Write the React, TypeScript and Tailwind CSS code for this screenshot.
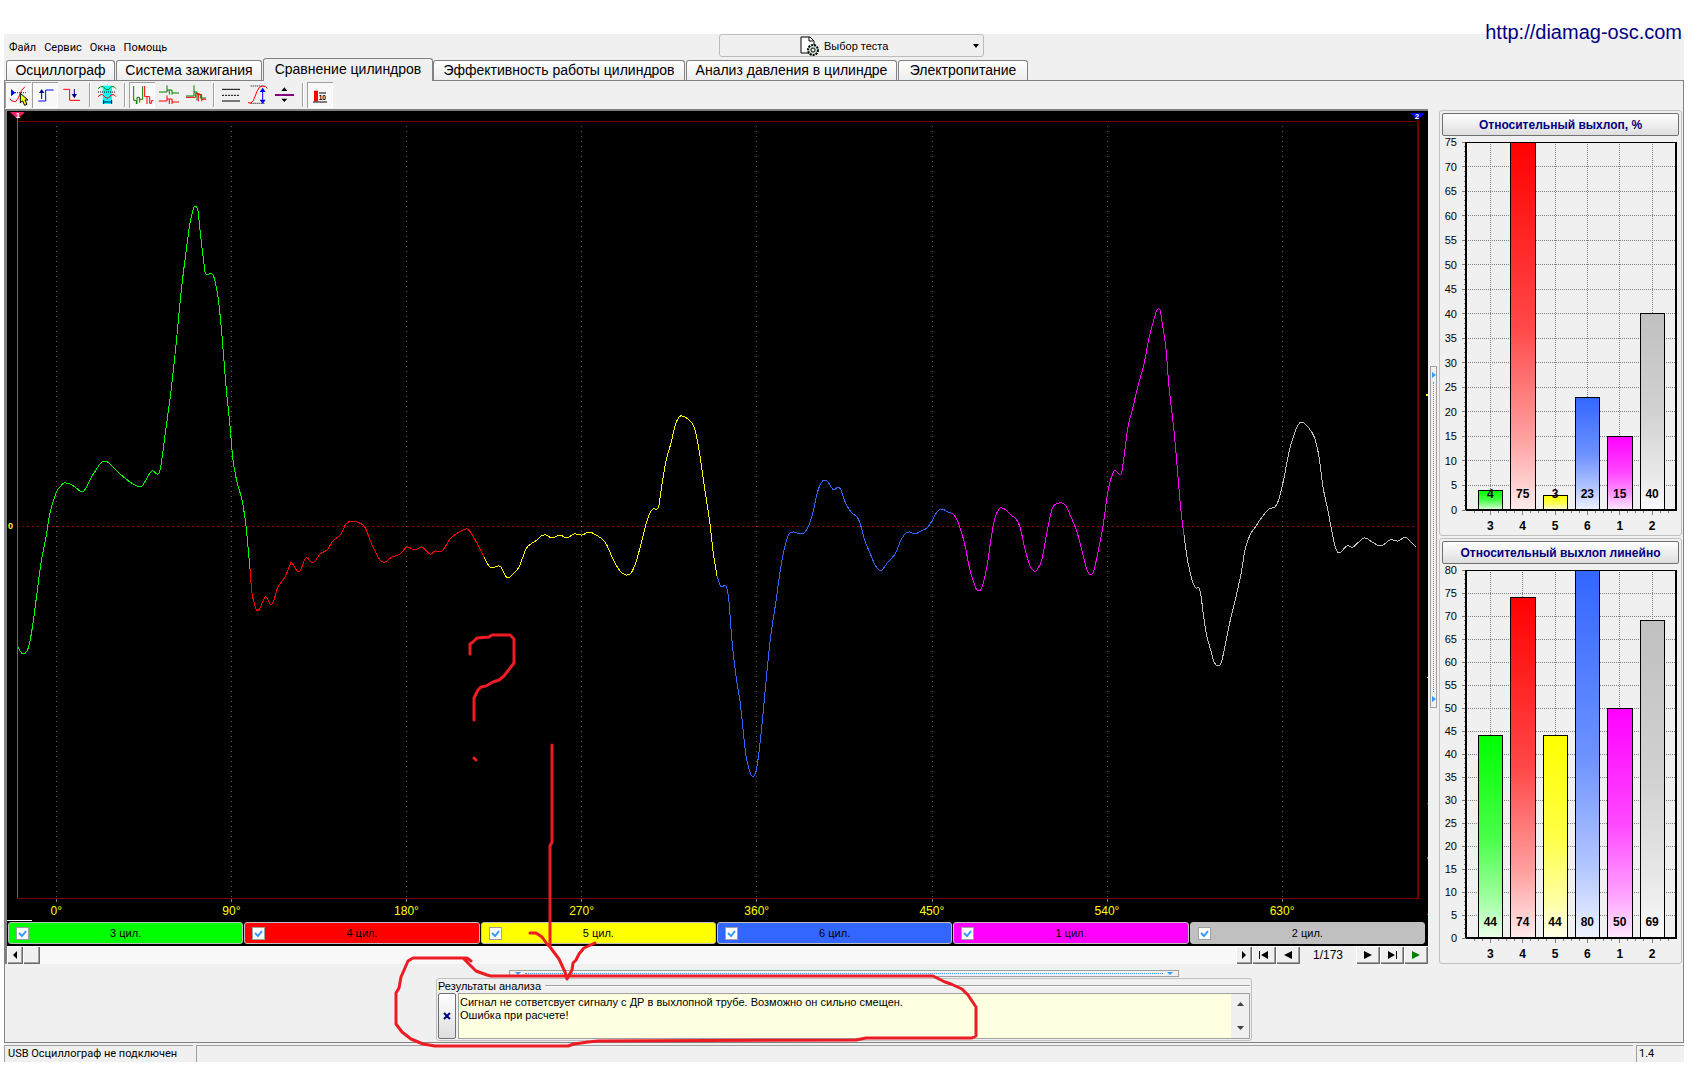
import type { ReactNode } from 'react';

type Point = [number, number];

const tabs = [
  { label: 'Осциллограф', width: 'w-[109px]' },
  { label: 'Система зажигания', width: 'w-[146px]' },
  { label: 'Сравнение цилиндров', width: 'w-[170px]', active: true },
  { label: 'Эффективность работы цилиндров', width: 'w-[252px]' },
  { label: 'Анализ давления в цилиндре', width: 'w-[211px]' },
  { label: 'Электропитание', width: 'w-[130px]' },
];

const cylinders = [
  { name: '3', color: '#00ff00', bg: 'bg-[#00ff00]', percent: 4, linear: 44 },
  { name: '4', color: '#ff0000', bg: 'bg-[#ff0000]', percent: 75, linear: 74 },
  { name: '5', color: '#ffff00', bg: 'bg-[#ffff00]', percent: 3, linear: 44 },
  { name: '6', color: '#3366ff', bg: 'bg-[#3366ff]', percent: 23, linear: 80 },
  { name: '1', color: '#ff00ff', bg: 'bg-[#ff00ff]', percent: 15, linear: 50 },
  { name: '2', color: '#c0c0c0', bg: 'bg-[#c0c0c0]', percent: 40, linear: 69 },
];

// One trace per cylinder, in firing order
const traces: Point[][] = [
  [
    [18, 646], [20, 650], [23, 653], [27, 650], [30, 640], [33, 622], [37, 592], [41, 562], [46, 536], [50, 512],
    [56, 492], [60, 486], [64, 482], [70, 483], [75, 486], [80, 490], [84, 490], [91, 477], [100, 463], [105, 460],
    [110, 463], [120, 473], [130, 481], [137, 485], [142, 485], [150, 472], [153, 470], [158, 473], [161, 464],
    [166, 427], [171, 390], [176, 344], [181, 292], [186, 251], [190, 222], [193, 209], [195, 205], [198, 210],
    [200, 229], [204, 263], [206, 273], [213, 274], [218, 296], [222, 335], [226, 385], [230, 425], [233, 459],
    [237, 481], [242, 499], [246, 525], [250, 568],
  ],
  [
    [250, 568], [252, 592], [255, 605], [257, 610], [260, 607], [265, 596], [268, 599], [271, 604], [274, 599],
    [278, 586], [285, 576], [290, 564], [292, 562], [299, 571], [306, 557], [313, 562], [320, 553], [327, 549],
    [333, 540], [341, 533], [346, 523], [352, 520], [363, 524], [367, 531], [373, 546], [380, 559], [385, 561],
    [392, 556], [400, 553], [407, 546], [415, 549], [422, 546], [430, 553], [435, 550], [442, 550], [451, 537],
    [461, 530], [467, 528], [471, 532], [478, 544], [484, 556],
  ],
  [
    [484, 556], [489, 565], [492, 567], [498, 565], [501, 566], [505, 574], [508, 577], [513, 573], [519, 566],
    [526, 548], [531, 543], [537, 539], [541, 535], [546, 534], [552, 537], [560, 534], [567, 537], [574, 533],
    [582, 534], [589, 531], [596, 534], [605, 541], [613, 558], [620, 570], [626, 574], [631, 572], [636, 561],
    [641, 543], [646, 523], [650, 512], [653, 508], [657, 508], [659, 504], [662, 483], [666, 460], [671, 442],
    [675, 425], [679, 416], [682, 415], [685, 416], [692, 422], [696, 433], [700, 455], [704, 483], [710, 523],
    [713, 550], [717, 575],
  ],
  [
    [717, 575], [720, 584], [722, 586], [725, 584], [727, 588], [729, 601], [732, 640], [736, 675], [740, 700],
    [743, 728], [746, 755], [750, 771], [753, 776], [756, 770], [759, 751], [763, 713], [767, 670], [771, 633],
    [776, 600], [780, 571], [784, 549], [788, 535], [790, 532], [794, 531], [801, 533], [805, 531], [809, 524],
    [813, 511], [817, 493], [821, 482], [825, 479], [828, 481], [831, 486], [834, 489], [838, 486], [841, 489],
    [846, 503], [852, 512], [857, 516], [860, 522], [865, 540], [870, 552], [875, 564], [879, 569], [882, 569],
    [888, 561], [895, 553], [901, 539], [906, 532], [910, 531], [915, 533], [921, 530], [927, 527], [932, 520],
    [937, 511], [942, 508], [948, 511], [951, 512],
  ],
  [
    [951, 512], [954, 514], [958, 521], [964, 540], [970, 569], [975, 585], [978, 590], [982, 586], [987, 565],
    [991, 538], [995, 517], [999, 508], [1002, 507], [1006, 509], [1011, 514], [1016, 518], [1020, 526], [1025, 548],
    [1030, 565], [1034, 570], [1037, 569], [1042, 558], [1047, 531], [1052, 508], [1056, 503], [1062, 502],
    [1066, 505], [1071, 516], [1077, 531], [1082, 550], [1087, 569], [1091, 574], [1094, 569], [1098, 551],
    [1103, 525], [1107, 496], [1110, 481], [1113, 472], [1115, 469], [1118, 472], [1120, 474], [1122, 470],
    [1125, 448], [1128, 426], [1133, 406], [1138, 385], [1144, 363], [1149, 337], [1155, 315], [1157, 309],
    [1160, 309], [1162, 321], [1166, 348], [1169, 386], [1174, 430], [1178, 476], [1181, 510], [1184, 534],
  ],
  [
    [1184, 534], [1187, 556], [1190, 571], [1193, 582], [1196, 587], [1199, 587], [1201, 595], [1204, 618],
    [1207, 636], [1211, 650], [1214, 661], [1218, 665], [1221, 662], [1224, 650], [1229, 625], [1235, 600],
    [1241, 573], [1245, 549], [1250, 534], [1256, 525], [1262, 516], [1269, 508], [1275, 506], [1279, 498],
    [1284, 477], [1289, 451], [1294, 434], [1298, 424], [1302, 421], [1306, 424], [1311, 430], [1315, 438],
    [1319, 456], [1323, 486], [1328, 510], [1332, 531], [1335, 545], [1339, 552], [1347, 545], [1353, 546],
    [1364, 537], [1372, 541], [1381, 545], [1390, 539], [1398, 540], [1405, 536], [1410, 540], [1416, 546],
  ],
];

// Catmull-Rom through all samples
function smooth(points: Point[]) {
  let d = `M${points[0][0]} ${points[0][1]}`;
  for (let i = 0; i < points.length - 1; i++) {
    const p0 = points[i - 1] ?? points[i];
    const p1 = points[i];
    const p2 = points[i + 1];
    const p3 = points[i + 2] ?? p2;
    d += `C${p1[0] + (p2[0] - p0[0]) / 6} ${p1[1] + (p2[1] - p0[1]) / 6} ${p2[0] - (p3[0] - p1[0]) / 6} ${
      p2[1] - (p3[1] - p1[1]) / 6
    } ${p2[0]} ${p2[1]}`;
  }
  return d;
}

function Menu() {
  return (
    <div className="grid h-6 grid-cols-[calc(50%-125px)_265px_1fr]">
      <nav className="flex items-center gap-2 pt-1 pl-[5px] font-[Roboto,sans-serif] text-[11px]">
        {['Файл', 'Сервис', 'Окна', 'Помощь'].map((item) => (
          <button key={item} type="button">
            {item}
          </button>
        ))}
      </nav>
      <button
        type="button"
        aria-haspopup="menu"
        className="flex h-[23px] items-center rounded-[3px] border border-[#bcbcbc] bg-[#f0f0f0] pt-px pr-1 pl-20 text-[11px]"
      >
        <svg className="h-5 w-5" viewBox="0 0 20 20" aria-hidden="true">
          <path d="M1 1H10L14 5V17H1Z" fill="#fff" stroke="#000" />
          <path d="M9 1V5H13" fill="none" stroke="#000" />
          <circle cx="13" cy="14" r="5" fill="#c8dcc8" stroke="#000" strokeWidth="2" strokeDasharray="2 1" />
          <circle cx="13" cy="14" r="2" fill="#fff" stroke="#000" />
        </svg>
        <span className="ml-1 flex-1 text-left">Выбор теста</span>
        <svg className="h-1 w-[6px]" viewBox="0 0 6 4" aria-hidden="true">
          <path d="M0 0H6L3 4Z" />
        </svg>
      </button>
    </div>
  );
}

function Tabs() {
  return (
    <div className="flex h-[22px] items-end pl-[2px] text-[14px] leading-[18px]" role="tablist">
      {tabs.map((tab) => (
        <button
          key={tab.label}
          type="button"
          role="tab"
          aria-selected={!!tab.active}
          className={`${tab.width} shrink-0 rounded-t-[3px] border border-b-0 border-[#828282] pb-[2px] whitespace-nowrap ${
            tab.active ? 'relative z-10 -mb-px h-[23px] bg-[#f0f0f0]' : 'mr-px h-5 bg-linear-to-b from-white to-[#ededed]'
          }`}
        >
          {tab.label}
        </button>
      ))}
    </div>
  );
}

function Tool({ label, pressed, children }: { label: string; pressed?: boolean; children: ReactNode }) {
  return (
    <button
      type="button"
      aria-label={label}
      aria-pressed={!!pressed}
      className={`h-[26px] w-[26px] ${
        pressed ? 'bg-[#f8f8f8] shadow-[inset_1px_1px_0_#a0a0a0,inset_-1px_-1px_0_#fff]' : ''
      }`}
    >
      <svg className="h-[26px] w-[26px]" viewBox="0 0 78 78" fill="none" strokeWidth="3">
        {children}
      </svg>
    </button>
  );
}

function Separator() {
  return <div className="mr-[2px] ml-[3px] h-6 w-[2px] border-l border-[#a0a0a0] bg-white" />;
}

function Toolbar() {
  return (
    <div className="flex h-[28px] items-center gap-px pb-px">
      <Tool label="Курсор" pressed>
        <path d="M15 50L20 57L32 59L40 48L50 25L60 14" stroke="#f00" />
        <path d="M18 21V43L31 32Z" fill="#00f" />
        <path d="M30 32H62" stroke="#00f" strokeDasharray="3 3" />
        <path d="M46 34V62L53 57L59 70L66 67L60 54H69Z" fill="#ff0" stroke="#000" />
      </Tool>
      <Tool label="Передний фронт" pressed>
        <path d="M19 57H41V24H65" stroke="#00f" />
        <path d="M29 30V51" stroke="#000080" />
        <path d="M29 21L21 33H37Z" fill="#000080" />
      </Tool>
      <Tool label="Задний фронт">
        <path d="M13 22H32V55H63" stroke="#f00" />
        <path d="M46 21V40" stroke="#000080" />
        <path d="M38 36H54L46 49Z" fill="#000080" />
      </Tool>
      <Separator />
      <Tool label="Синхронизация">
        <path d="M26 11H54V66H26Z" fill="#0ff" />
        <path d="M12 20L20 14H28L36 23H44L52 14H60L66 20" stroke="#008000" />
        <path d="M12 30H66" stroke="#000" strokeDasharray="3 3" />
        <path d="M12 44L20 38H26L36 48H44L52 38H60L66 44" stroke="#f00" />
        <path d="M29 54V66M53 54V66M29 60H53" stroke="#000080" />
      </Tool>
      <Separator />
      <Tool label="Парад" pressed>
        <path d="M14 12V55H22V66M24 66V46H32V62M32 52H41V12" stroke="#008000" />
        <path d="M47 12V44H54V66M54 44H62V64H67V56H73" stroke="#f00" />
      </Tool>
      <Tool label="Растр">
        <path d="M9 30H33V10M33 24H40V37M40 24H48V38M48 33H69" stroke="#008000" />
        <path d="M9 57H33V40M33 51H40V66M40 51H48V66M48 60H69" stroke="#f00" />
      </Tool>
      <Tool label="Наложение">
        <path d="M9 42H33V10M33 30H42V56M42 36H52V48H69" stroke="#008000" />
        <path d="M9 46H38V34H46V58M46 38H56V58M56 52H69" stroke="#f00" />
      </Tool>
      <Separator />
      <Tool label="Линии">
        <path d="M12 22H66M12 57H66" stroke="#000" />
        <path d="M12 40H66" stroke="#000" strokeDasharray="6 3" />
      </Tool>
      <Tool label="Размах">
        <path d="M17 12H60M17 64H60" stroke="#000" strokeDasharray="3 3" />
        <path d="M9 62L18 63L25 56L36 28L43 16L52 12L62 14L67 20" stroke="#f00" />
        <path d="M53 26V56" stroke="#00f" />
        <path d="M53 17L44 30H62ZM53 66L44 53H62Z" fill="#00f" />
      </Tool>
      <Tool label="Смещение">
        <path d="M9 39H66" stroke="#800080" strokeWidth="6" />
        <path d="M37 16L28 27H46ZM37 60L28 50H46Z" fill="#000" />
      </Tool>
      <Separator />
      <Tool label="Диаграмма" pressed>
        <path d="M21 26H33V58H21Z" fill="#f00" />
        <path d="M36 33H57M18 60H60" stroke="#000" />
        <text x="35" y="55" fontSize="20" fontWeight="bold" fill="#000">
          10
        </text>
      </Tool>
    </div>
  );
}

function Scope() {
  return (
    <div className="flex min-h-0 flex-1 flex-col pt-[10px] pr-[10px] pb-[24px] pl-[10px]">
      <svg className="min-h-0 w-full flex-1 overflow-visible" fill="none">
        <svg
          width="100%"
          height="100%"
          viewBox="17 121 1401 777"
          preserveAspectRatio="none"
          overflow="visible"
          shapeRendering="crispEdges"
        >
          <path d="M17 526H1418" stroke="#900000" strokeDasharray="2 3" />
          {[0, 1, 2, 3, 4, 5, 6, 7].map((i) => (
            <g key={i}>
              <path d={`M${56 + 175.2 * i} 126V898`} stroke="#606060" strokeDasharray="1 4" />
              <path d={`M${56 + 175.2 * i} 899V902`} stroke="#808080" />
            </g>
          ))}
          <path d="M17 121.5H1418.5V898.5H17" stroke="#800000" />
          {traces.map((points, i) => (
            <path key={i} d={smooth(points)} transform="translate(0 1)" stroke={cylinders[i].color} />
          ))}
          <path d="M17.5 118V898" stroke="#ff2060" />
          <path d="M1417.5 118V898" stroke="#0000ff" />
          <path d="M7 920.5H32" stroke="#fff" />
          <path d="M1426 394.5H1428" stroke="#ff0" strokeWidth="2" />
          <path d="M1427 677.5H1428" stroke="#fff" />
          <path d="M1427 803.5H1428M1427 914.5H1428" stroke="#f00" />
          <path d="M1427 857.5H1428" stroke="#36f" strokeWidth="2" />
        </svg>
        <svg x="0" y="0" overflow="visible">
          <path d="M-7 -9H8L0.500 -2Z" fill="#ff2060" />
          <text x="1" y="-3" textAnchor="middle" fontSize="8" fontWeight="bold" fill="#fff">
            1
          </text>
        </svg>
        <svg x="100%" y="0" overflow="visible">
          <path d="M-8 -8H7L-0.500 -1Z" fill="#0000ff" />
          <text x="-1" y="-2" textAnchor="middle" fontSize="8" fontWeight="bold" fill="#fff">
            2
          </text>
        </svg>
        <text x="-9" y="52.1%" dy="3" fontSize="9" fontWeight="bold" fill="#ff0">
          0
        </text>
        {[0, 90, 180, 270, 360, 450, 540, 630].map((deg, i) => (
          <text key={deg} x={`${2.8 + 12.5 * i}%`} y="100%" dy="17" textAnchor="middle" fontSize="12" fill="#ff0">
            {deg}°
          </text>
        ))}
      </svg>
    </div>
  );
}

function Legend() {
  return (
    <div className="flex h-6 gap-px pr-[3px] pb-[2px] pl-px">
      {cylinders.map((c) => (
        <label
          key={c.name}
          className={`relative flex flex-1 items-center justify-center rounded-[3px] border border-[#c0c0c0] text-[11px] ${c.bg}`}
        >
          <span className="absolute left-[7px] flex h-[13px] w-[13px]">
            <input
              type="checkbox"
              defaultChecked
              className="peer h-[13px] w-[13px] appearance-none border border-[#a0a0a0] bg-white"
            />
            <svg
              className="pointer-events-none invisible absolute inset-0 peer-checked:visible"
              viewBox="0 0 13 13"
              aria-hidden="true"
            >
              <path d="M3 6L6 9L10 4" fill="none" stroke="#3399ff" strokeWidth="2" />
            </svg>
          </span>
          {c.name} цил.
        </label>
      ))}
    </div>
  );
}

const raised =
  'flex items-center justify-center bg-[#f0f0f0] shadow-[inset_1px_1px_0_#fff,inset_-1px_-1px_0_#696969,inset_-2px_-2px_0_#a0a0a0]';

function NavButton({ label, d, wide, fill = '#000' }: { label: string; d: string; wide?: boolean; fill?: string }) {
  return (
    <button type="button" aria-label={label} className={`${raised} h-full ${wide ? 'w-6' : 'w-4'}`}>
      <svg className="h-[8px] w-[12px]" viewBox="0 0 12 8" fill={fill}>
        <path d={d} />
      </svg>
    </button>
  );
}

function Navigator() {
  return (
    <div className="flex h-[18px] bg-[#f0f0f0] text-[12px]">
      <NavButton label="Прокрутить влево" d="M8 0V8L4 4Z" />
      <div className="flex flex-1 bg-[#f8f8f8]">
        <div className={`${raised} w-[17px]`} />
      </div>
      <NavButton label="Прокрутить вправо" d="M4 0V8L8 4Z" />
      <NavButton wide label="Первый кадр" d="M1 0H2V8H1ZM10 0V8L3 4Z" />
      <NavButton wide label="Предыдущий кадр" d="M10 0V8L2 4Z" />
      <span className="w-14 text-center leading-[18px]">1/173</span>
      <NavButton wide label="Следующий кадр" d="M2 0V8L10 4Z" />
      <NavButton wide label="Последний кадр" d="M2 0V8L9 4ZM10 0H11V8H10Z" />
      <NavButton wide label="Воспроизвести" d="M2 0V8L10 4Z" fill="#008000" />
    </div>
  );
}

function BarChart({ id, title, max, values }: { id: string; title: string; max: number; values: number[] }) {
  const marks = Array.from({ length: max / 5 + 1 }, (_, i) => i * 5);
  const center = (i: number) => 11.6 + 15.4 * i;
  return (
    <section className="flex min-h-0 flex-1 flex-col rounded-[3px] border border-[#c0c0c0] p-[2px]">
      <button
        type="button"
        className="h-[23px] rounded-[2px] border border-[#707070] bg-linear-to-b from-white to-[#dedede] text-[12px] font-bold text-[#000080]"
      >
        {title}
      </button>
      <div className="flex min-h-0 flex-1 flex-col pt-[6px] pr-[3px] pb-[23px] pl-[24px]">
        <svg className="min-h-0 w-full flex-1 overflow-visible" shapeRendering="crispEdges" fill="none">
          <defs>
            {cylinders.map((c) => (
              <linearGradient key={c.name} id={`${id}-${c.name}`} x1="0" y1="0" x2="0" y2="1">
                <stop offset="0" stopColor={c.color} />
                <stop offset="0.5" stopColor={c.color} stopOpacity="0.72" />
                <stop offset="0.8" stopColor={c.color} stopOpacity="0.38" />
                <stop offset="1" stopColor={c.color} stopOpacity="0.08" />
              </linearGradient>
            ))}
          </defs>
          {marks.map((m) => {
            const y = `${100 - (m / max) * 100}%`;
            return (
              <g key={m}>
                <line x1="0" x2="100%" y1={y} y2={y} stroke="#808080" strokeDasharray="1 1" />
                <line x1="-4" x2="0" y1={y} y2={y} stroke="#808080" />
                <text x="-9" y={y} dy="4" textAnchor="end" fontSize="11" fill="#000">
                  {m}
                </text>
              </g>
            );
          })}
          {Array.from({ length: max }, (_, i) => (
            <line key={i} x1="-2" x2="0" y1={`${(i / max) * 100}%`} y2={`${(i / max) * 100}%`} stroke="#808080" />
          ))}
          {cylinders.map((c, i) => {
            const height = (values[i] / max) * 100;
            return (
              <g key={c.name}>
                <line x1={`${center(i)}%`} x2={`${center(i)}%`} y1="0" y2="100%" stroke="#808080" strokeDasharray="1 1" />
                {[-2, -1, 0, 1, 2].map((k) => (
                  <svg key={k} x={`${center(i) + k * 3.85}%`} y="100%" overflow="visible">
                    <path d={k === 0 ? 'M0 0V5' : 'M0 0V3'} stroke="#808080" />
                  </svg>
                ))}
                <svg x={`${center(i) - 5.7}%`} y={`${100 - height}%`} width="11.6%" height={`${height}%`} overflow="visible">
                  <rect width="100%" height="100%" fill="#fff" />
                  <rect width="100%" height="100%" fill={`url(#${id}-${c.name})`} stroke="#000" />
                </svg>
                <text x={`${center(i)}%`} y="100%" dy="-12" textAnchor="middle" fontSize="12" fontWeight="bold" fill="#000">
                  {values[i]}
                </text>
                <text x={`${center(i)}%`} y="100%" dy="20" textAnchor="middle" fontSize="12" fontWeight="bold" fill="#000">
                  {c.name}
                </text>
              </g>
            );
          })}
          <rect width="100%" height="100%" stroke="#000" />
          <line x1="0" x2="0" y1="0" y2="100%" stroke="#000" strokeWidth="2" />
          <line x1="100%" x2="100%" y1="0" y2="100%" stroke="#000" strokeWidth="2" />
          <line x1="0" x2="100%" y1="100%" y2="100%" stroke="#000" strokeWidth="2" />
        </svg>
      </div>
    </section>
  );
}

function Results() {
  return (
    <div className="mx-auto flex h-[63px] w-[816px] max-w-full flex-col rounded-[3px] border border-[#c0c0c0] px-px pb-px text-[11px]">
      <div className="flex h-[14px] items-center gap-1 leading-[14px]">
        <span>Результаты анализа</span>
        <span className="h-[2px] flex-1 border-t border-[#a0a0a0] bg-white" />
      </div>
      <div className="flex min-h-0 flex-1 gap-[2px]">
        <button
          type="button"
          aria-label="Закрыть"
          className="flex w-[18px] items-center justify-center rounded-[2px] border border-[#707070] bg-linear-to-b from-white to-[#dedede]"
        >
          <svg className="h-2 w-2" viewBox="0 0 8 8" aria-hidden="true">
            <path d="M1 1L7 7M7 1L1 7" stroke="#000080" strokeWidth="2" />
          </svg>
        </button>
        <div className="flex flex-1 border border-[#a0a0a0] bg-[#ffffe1]">
          <textarea
            readOnly
            aria-label="Результаты анализа"
            className="flex-1 resize-none overflow-hidden pt-[2px] pl-px leading-[13px] outline-none"
            defaultValue={
              'Сигнал не сответсвует сигналу с ДР в выхлопной трубе. Возможно он сильно смещен.\nОшибка при расчете!'
            }
          />
          <div className="flex w-[18px] flex-col items-center justify-between bg-[#f0f0f0] py-2">
            <svg className="h-1 w-[7px]" viewBox="0 0 7 4" aria-hidden="true">
              <path d="M0 4H7L3.500 0Z" fill="#404040" />
            </svg>
            <svg className="h-1 w-[7px]" viewBox="0 0 7 4" aria-hidden="true">
              <path d="M0 0H7L3.500 4Z" fill="#404040" />
            </svg>
          </div>
        </div>
      </div>
    </div>
  );
}

// Hand-drawn remarks over the window
function Marks() {
  return (
    <svg
      className="pointer-events-none absolute inset-0 z-20 h-full w-full"
      viewBox="0 0 1696 1066"
      preserveAspectRatio="none"
      fill="none"
      stroke="#ed1c24"
      strokeWidth="3"
      strokeLinecap="round"
      strokeLinejoin="round"
      aria-hidden="true"
    >
      <path d="M470 654V644L473 642L477 638L489 637L492 635H510L514 639V663L504 676L499 680L493 682L486 686L481 687L478 690L474 698V720M474 758L476 760" />
      <path d="M552 745V842L550 846V947L559 959L565 972L567 979L572 970L573 963L576 960L579 954L584 948L595 943M530 933H536L542 937L547 944L550 947" />
      <path d="M471 961L467 958H413L408 961L401 977L399 988L396 993V1024L402 1032L411 1039L423 1044L435 1046H568L574 1044L588 1042L598 1041L856 1040L866 1038H972L976 1036V1007L968 995L962 989L951 984L945 982L933 976H491L487 975L476 971L468 963L463 958" />
    </svg>
  );
}

export default function App() {
  return (
    <div className="relative flex h-screen min-h-[640px] flex-col bg-white pt-[34px] pr-3 pb-1 pl-1 font-['Liberation_Sans',Arial,sans-serif] text-black">
      <a href="http://diamag-osc.com" className="absolute top-5 right-[14px] text-[20px] leading-6 text-[#000080]">
        http://diamag-osc.com
      </a>
      <div className="flex min-h-0 flex-1 flex-col bg-[#f0f0f0]">
        <Menu />
        <Tabs />
        <main className="flex min-h-0 flex-1 flex-col border border-[#828282]">
          <Toolbar />
          <div className="flex min-h-0 flex-1">
            <div className="flex min-w-0 flex-1 flex-col border-t-2 border-l-2 border-[#808080]">
              <div className="flex min-h-0 flex-1 flex-col bg-black">
                <Scope />
                <Legend />
              </div>
              <Navigator />
            </div>
            <div className="mx-[2px] flex h-[342px] w-[7px] flex-col items-center justify-between self-center border border-[#a0a0a0] py-[5px]">
              <svg className="h-[6px] w-1" viewBox="0 0 4 6" aria-hidden="true">
                <path d="M0 0V6L4 3Z" fill="#3399ff" />
              </svg>
              <div className="my-1 flex-1 border-l border-dotted border-[#3399ff]" />
              <svg className="h-[6px] w-1" viewBox="0 0 4 6" aria-hidden="true">
                <path d="M0 0V6L4 3Z" fill="#3399ff" />
              </svg>
            </div>
            <aside className="mr-px flex w-[243px] flex-col gap-[2px] pt-px">
              <BarChart id="percent" title="Относительный выхлоп, %" max={75} values={cylinders.map((c) => c.percent)} />
              <BarChart id="linear" title="Относительный выхлоп линейно" max={80} values={cylinders.map((c) => c.linear)} />
            </aside>
          </div>
          <div className="mx-auto mt-[6px] flex h-[7px] w-[670px] max-w-full items-center border border-[#a0a0a0] px-[5px]">
            <svg className="h-[3px] w-[6px]" viewBox="0 0 6 3" aria-hidden="true">
              <path d="M0 0H6L3 3Z" fill="#3399ff" />
            </svg>
            <div className="mx-1 flex-1 border-t border-dotted border-[#3399ff]" />
            <svg className="h-[3px] w-[6px]" viewBox="0 0 6 3" aria-hidden="true">
              <path d="M0 0H6L3 3Z" fill="#3399ff" />
            </svg>
          </div>
          <div className="mt-px mb-px">
            <Results />
          </div>
        </main>
        <footer className="mt-[2px] flex h-[17px] gap-[3px] font-[Roboto,sans-serif] text-[11px] leading-4">
          <span className="w-[189px] border-t border-l border-[#a0a0a0] pl-[3px]">USB Осциллограф не подключен</span>
          <span className="flex-1 border-t border-l border-[#a0a0a0]" />
          <span className="w-12 border-t border-l border-[#a0a0a0] pl-[2px]">1.4</span>
        </footer>
      </div>
      <Marks />
    </div>
  );
}
